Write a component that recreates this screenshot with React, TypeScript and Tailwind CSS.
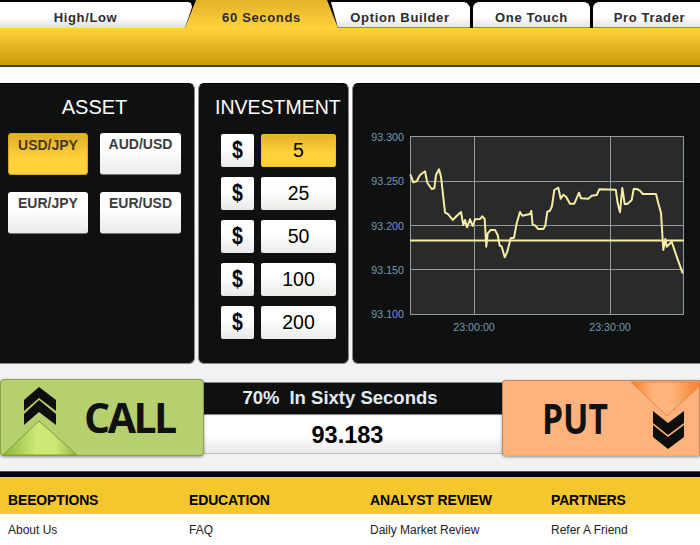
import React from 'react';

const raw = [181,283,190,307,200,304,210,285,225,274,232,308,245,327,253,325,258,285,267,268,273,290,285,397,295,403,308,420,320,408,333,396,340,435,345,420,351,442,360,418,368,438,375,418,390,417,397,409,404,417,409,500,413,460,422,450,435,450,443,465,449,497,455,500,464,532,472,515,482,475,492,473,500,430,510,396,517,407,540,402,544,393,548,435,555,436,565,447,580,447,586,437,592,395,600,392,606,378,613,330,625,323,632,356,640,344,648,350,660,371,673,371,687,338,693,355,715,356,725,347,740,345,748,328,797,329,803,370,810,397,817,324,824,372,832,372,845,360,851,327,860,327,870,332,878,342,918,342,925,370,933,398,940,510,946,477,950,500,965,485,980,530,998,580];

const linePoints = raw.map((v) => (v / 3).toFixed(1)).reduce((acc, v, i) => acc + (i % 2 ? ',' : ' ') + v, '');

const assets = ['USD/JPY', 'AUD/USD', 'EUR/JPY', 'EUR/USD'];
const amounts = ['5', '25', '50', '100', '200'];

const footer = [
  { title: 'BEEOPTIONS', link: 'About Us' },
  { title: 'EDUCATION', link: 'FAQ' },
  { title: 'ANALYST REVIEW', link: 'Daily Market Review' },
  { title: 'PARTNERS', link: 'Refer A Friend' },
];

function Chart() {
  const yLabels = ['93.300', '93.250', '93.200', '93.150', '93.100'];
  const labelFont = 'Liberation Sans, sans-serif';
  return (
    <svg viewBox="3 4 350 281" className="block w-[350px] h-[281px]">
      <rect x="60.5" y="56.5" width="273" height="178" fill="#2a2a2a" stroke="#8f9ca3" />
      {[101.5, 145.5, 189.5].map((y) => (
        <line key={y} x1="60" x2="334" y1={y} y2={y} stroke="#8f9ca3" />
      ))}
      {[124.5, 260.5].map((x) => (
        <line key={x} x1={x} x2={x} y1="56" y2="235" stroke="#8f9ca3" />
      ))}
      {yLabels.map((t, i) => (
        <text key={t} x="54" y={[61, 105, 150, 194, 238][i]} textAnchor="end" fill="#6f9ab5" fontSize="10.7" fontFamily={labelFont}>
          {t}
        </text>
      ))}
      <text x="124" y="251" textAnchor="middle" fill="#6f9ab5" fontSize="10.7" fontFamily={labelFont}>23:00:00</text>
      <text x="260" y="251" textAnchor="middle" fill="#6f9ab5" fontSize="10.7" fontFamily={labelFont}>23:30:00</text>
      <line x1="60" x2="334" y1="160.5" y2="160.5" stroke="#f6eda5" strokeWidth="2" />
      <polyline points={linePoints} fill="none" stroke="#f6eda5" strokeWidth="2" strokeLinejoin="round" />
    </svg>
  );
}

function UpArrow() {
  return (
    <svg viewBox="0 0 90 90" className="absolute left-[-1px] top-[-5px] w-[90px] h-[90px]">
      <defs>
        <linearGradient id="callTri" x1="0" x2="1" y1="0" y2="0">
          <stop offset="0" stopColor="#8db83f" />
          <stop offset="0.45" stopColor="#cce875" />
          <stop offset="0.7" stopColor="#cce875" />
          <stop offset="1" stopColor="#94b94a" />
        </linearGradient>
      </defs>
      <path d="M39 12 L56 25 V36 L39 23 L24 36 V25 Z" fill="#0e0e0e" />
      <path d="M39 25 L56 39 V50 L39 37 L24 50 V39 Z" fill="#0e0e0e" />
      <path d="M3 80 L39 46 L77 80 Z" fill="url(#callTri)" stroke="#7c9f35" />
    </svg>
  );
}

function DownArrow() {
  return (
    <svg viewBox="0 0 90 90" className="absolute left-[107px] top-[-5px] w-[90px] h-[90px]">
      <defs>
        <linearGradient id="putTri" x1="0" x2="1" y1="0" y2="0">
          <stop offset="0" stopColor="#f47a22" />
          <stop offset="0.3" stopColor="#ffb47c" />
          <stop offset="0.55" stopColor="#ffb47c" />
          <stop offset="1" stopColor="#f47a22" />
        </linearGradient>
      </defs>
      <path d="M21 6 L57 40 L94 6 Z" fill="url(#putTri)" stroke="#d98c55" />
      <path d="M43 35 L58 47 L74 35 V47 L58 59 L43 47 Z" fill="#0e0e0e" />
      <path d="M43 49 L58 61 L74 49 V61 L58 73 L43 61 Z" fill="#0e0e0e" />
    </svg>
  );
}

export default function App() {
  return (
    <div className="w-[700px] h-[545px] overflow-hidden bg-[#f2f2f2] font-['Liberation_Sans',sans-serif]">
      {/* tabs */}
      <div className="h-[28px] bg-black flex items-start text-[13px] font-bold text-[#2c2c2c] tracking-[0.65px]">
        <div className="shrink-0 w-[193px] h-[26px] mt-[2px] pt-[6px] pr-[22px] bg-gradient-to-b from-white from-60% to-[#dcdcdc] flex items-center justify-center [clip-path:polygon(0_0,188px_0,191px_1px,192px_5px,185px_26px,0_26px)]">
          High/Low
        </div>
        <div className="shrink-0 relative z-10 w-[153px] h-[28px] -ml-[8px] pt-[8px] bg-gradient-to-b from-[#e3b22a] to-[#ffd23a] flex items-center justify-center [clip-path:polygon(11px_0,142px_0,153px_100%,0_100%)]">
          60 Seconds
        </div>
        <div className="shrink-0 w-[140px] h-[26px] mt-[2px] -ml-[8px] pt-[6px] bg-gradient-to-b from-white from-60% to-[#e4e4e4] border-b border-[#888] flex items-center justify-center [clip-path:polygon(1px_0,134px_0,137px_1px,140px_5px,140px_100%,8px_100%)]">
          Option Builder
        </div>
        <div className="shrink-0 w-[117px] h-[26px] mt-[2px] ml-[3px] pt-[6px] rounded-t-[6px] bg-gradient-to-b from-white from-60% to-[#e4e4e4] border-b border-[#888] flex items-center justify-center">
          One Touch
        </div>
        <div className="shrink-0 w-[113px] h-[26px] mt-[2px] ml-[3px] pt-[6px] rounded-t-[6px] bg-gradient-to-b from-white from-60% to-[#e4e4e4] border-b border-[#888] flex items-center justify-center">
          Pro Trader
        </div>
      </div>
      <div className="h-[39px] bg-gradient-to-b from-[#ffd23a] to-[#c99a05] border-b-2 border-[#3d3d3d]" />

      {/* panels */}
      <div className="bg-gradient-to-b from-white to-[#f2f2f2] pt-[16px] flex gap-[3px] -ml-[10px] w-[720px]">
        <section className="w-[205px] h-[281px] shrink-0 bg-[#0f1110] rounded-[6px] border border-[#8a8a8a] border-t-black flex flex-col">
          <h2 className="text-[20px] text-white leading-[23px] mt-[12px] pl-[4px] w-full text-center">ASSET</h2>
          <div className="grid grid-cols-[80px_81px] gap-x-[12px] gap-y-[17px] mt-[14px] pl-[17px]">
            {assets.map((a, i) => (
              <button
                key={a}
                className={`w-full h-[42px] rounded-[3px] pt-[2px] text-[14px] font-bold leading-[18px] flex justify-center ${
                  i === 0
                    ? 'bg-gradient-to-b from-[#e3b22a] to-[#ffd23c] from-10% to-60% text-[#4a3a1a] border border-[#d9a81c]'
                    : 'bg-gradient-to-b from-white from-40% to-[#eaeaea] text-[#3c3c3c] border-b border-[#777]'
                }`}
              >
                {a}
              </button>
            ))}
          </div>
        </section>

        <section className="w-[151px] h-[281px] shrink-0 bg-[#0f1110] rounded-[6px] border border-[#8a8a8a] border-t-black flex flex-col">
          <h2 className="text-[19.5px] text-white leading-[23px] mt-[12px] pl-[16px] whitespace-nowrap">INVESTMENT</h2>
          <div className="flex flex-col gap-[10px] mt-[15px] pl-[22px]">
            {amounts.map((a, i) => (
              <div key={a} className="flex gap-[7px]">
                <div className="w-[33px] h-[33px] rounded-[2px] bg-gradient-to-b from-white from-40% to-[#e8e8e8] flex items-center justify-center text-[23px] font-bold text-black">
                  <span className="scale-x-[0.85]">$</span>
                </div>
                <div
                  className={`w-[75px] h-[33px] rounded-[2px] flex items-center justify-center text-[19.5px] text-black ${
                    i === 0
                      ? 'bg-gradient-to-b from-[#e3b22a] to-[#ffd23c] to-60% border border-[#e8c420]'
                      : 'bg-gradient-to-b from-white from-40% to-[#ebebe8]'
                  }`}
                >
                  {a}
                </div>
              </div>
            ))}
          </div>
        </section>

        <section className="w-[358px] h-[281px] shrink-0 bg-[#0f1110] rounded-[6px] border border-[#8a8a8a] border-t-black overflow-hidden">
          <Chart />
        </section>
      </div>

      {/* call / put strip */}
      <div className="flex items-start mt-[15px] h-[78px] w-[700px]">
        <button className="relative z-10 shrink-0 w-[204px] h-[77px] bg-[#b6d06f] rounded-[4px] border border-[#86a04d] shadow-[0_1px_3px_rgba(0,0,0,0.4)]">
          <UpArrow />
          <span className="absolute left-[83px] top-[15px] text-[41px] leading-[44px] font-bold text-[#111] font-['Open_Sans',sans-serif] tracking-[-2.5px]">CALL</span>
        </button>
        <div className="flex-1 pt-[3px]">
          <div className="h-[33px] pr-[26px] pb-[2px] bg-[#0f1110] border-y border-[#888] flex items-center justify-center gap-[10px] text-[18.5px] font-bold text-[#e3ebf3]">
            <span>70%</span>
            <span>In Sixty Seconds</span>
          </div>
          <div className="h-[38px] mt-[1px] pt-[2px] pr-[11px] bg-gradient-to-b from-white from-50% to-[#e8e8e8] border-b border-[#bbb] flex items-center justify-center text-[23.5px] font-bold text-black">
            93.183
          </div>
        </div>
        <button className="relative z-10 shrink-0 w-[198px] h-[76px] mt-[1px] bg-[#ffb27c] rounded-l-[4px] border border-[#c58657] border-b-[#e9b26c] shadow-[0_1px_3px_rgba(0,0,0,0.4)]">
          <DownArrow />
          <span className="absolute left-[39px] top-[15px] origin-left scale-x-[0.82] text-[41px] leading-[44px] font-bold text-[#111] font-['Open_Sans',sans-serif]">PUT</span>
        </button>
      </div>

      {/* footer */}
      <div className="mt-[14px] border-t border-[#555] border-b-[5px] border-b-black h-0" />
      <div className="h-[37px] bg-[#f4c82c] grid grid-cols-[181px_181px_181px_1fr] pl-[8px] items-end pb-[3px] text-[14px] font-bold text-black tracking-[-0.15px]">
        {footer.map((f) => (
          <div key={f.title}>{f.title}</div>
        ))}
      </div>
      <div className="h-[31px] bg-white grid grid-cols-[181px_181px_181px_1fr] pl-[8px] pt-[6.5px] text-[12px] text-[#222]">
        {footer.map((f) => (
          <div key={f.link}>{f.link}</div>
        ))}
      </div>
    </div>
  );
}
